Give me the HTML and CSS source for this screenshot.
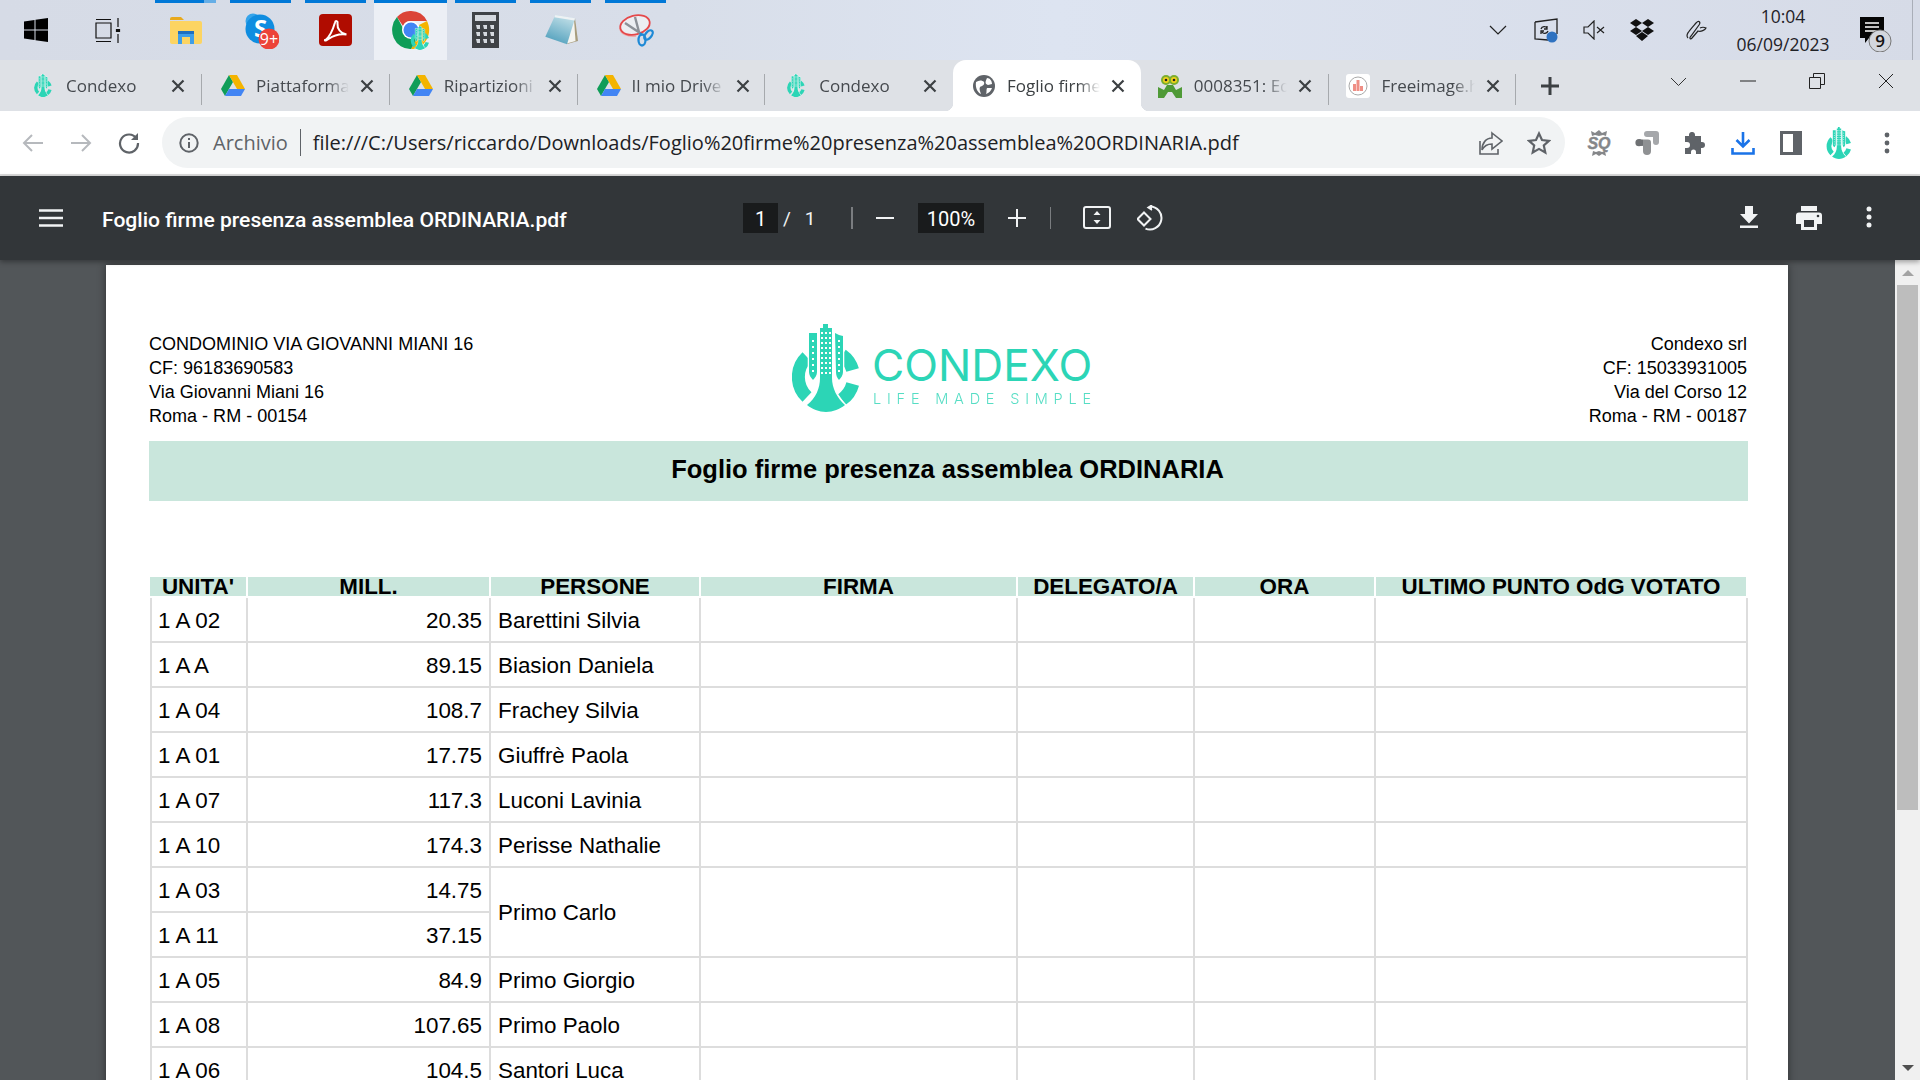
FILE: index.html
```html
<!DOCTYPE html>
<html lang="it">
<head>
<meta charset="utf-8">
<title>Foglio firme presenza assemblea ORDINARIA.pdf</title>
<link rel="stylesheet" href="styles.css">
</head>
<body>
<svg class="defs" width="0" height="0" aria-hidden="true">
  <defs>
    <linearGradient id="padg" x1="0.700" y1="0" x2="0.300" y2="1"><stop offset="0" stop-color="#c3e0e8"/><stop offset="1" stop-color="#4f9fbc"/></linearGradient>
  </defs>
  <symbol id="condexo" viewBox="0 0 68 88">
    <g fill="none" stroke="currentColor" stroke-width="13">
      <path d="M15 33A27.500 27.500 0 0 0 15 73"/>
      <path d="M50 31A27.500 27.500 0 0 1 60.600 46"/>
      <path d="M60.700 60A27.500 27.500 0 0 1 50 75.500"/>
    </g>
    <g fill="currentColor" stroke="#fff" stroke-width="2.600" paint-order="stroke">
      <path d="M17 9h8v39c0 3-2 6-4 8-2-2-4-5-4-8z"/>
      <path d="M43 9l4 2 4 1v36c0 3-2 6-4 8-2-2-3-5-3-8z"/>
      <path d="M31 0h5v4h4v50c0 10 5 20 13 27-5 4-12 7-19 7s-14-3-19-7c9-7 13-17 13-27V4h3z"/>
    </g>
    <path fill="#fff" d="M29 8h2v2h-2zM33 8h2v2h-2zM37 8h2v2h-2zM29 13h2v2h-2zM33 13h2v2h-2zM37 13h2v2h-2zM29 18h2v2h-2zM33 18h2v2h-2zM37 18h2v2h-2zM29 23h2v2h-2zM33 23h2v2h-2zM37 23h2v2h-2zM29 28h2v2h-2zM33 28h2v2h-2zM37 28h2v2h-2zM29 33h2v2h-2zM33 33h2v2h-2zM37 33h2v2h-2zM29 38h2v2h-2zM33 38h2v2h-2zM37 38h2v2h-2zM29 43h2v2h-2zM33 43h2v2h-2zM37 43h2v2h-2zM29 48h2v2h-2zM33 48h2v2h-2zM37 48h2v2h-2zM20 16h2v2h-2zM20 22h2v2h-2zM20 28h2v2h-2zM20 34h2v2h-2zM20 40h2v2h-2zM20 46h2v2h-2zM46 16h2v2h-2zM46 22h2v2h-2zM46 28h2v2h-2zM46 34h2v2h-2zM46 40h2v2h-2zM46 46h2v2h-2z"/>
  </symbol>
  <symbol id="drive" viewBox="0 0 24 22">
    <path fill="#0f9d58" d="M8 0 0 14l4 7L12 7z"/>
    <path fill="#f4b400" d="M8 0h8l8 14h-8z"/>
    <path fill="#4285f4" d="M4 21h16l4-7H8z"/>
  </symbol>
  <symbol id="close" viewBox="0 0 14 14">
    <path d="M1.500 1.500l11 11M12.500 1.500l-11 11" stroke="currentColor" stroke-width="2.200" fill="none"/>
  </symbol>
</svg>

<header class="taskbar">
  <div class="tb-start">
    <svg width="24" height="24" viewBox="0 0 24 24"><path d="M0 3.500 10.500 2v9.500H0zM11.500 1.800 24 0v11.500H11.500zM0 12.500h10.500V22L0 20.500zM11.500 12.500H24V24l-12.500-1.800z"/></svg>
  </div>
  <div class="tb-task">
    <svg width="26" height="25" viewBox="0 0 26 25" fill="none" stroke="#111" stroke-width="1.200"><path d="M1 1.500h15M1 23.500h15M1 5h15v15H1zM23 0v9M23 16v9"/><path d="M21.500 11.500h3v2h-3z" fill="#111"/></svg>
  </div>
  <div class="tb-item tb-first">
    <svg width="32" height="27" viewBox="0 0 32 27"><path fill="#e8a91d" d="M0 2a2 2 0 0 1 2-2h9l3 3H0z"/><path fill="#fcd462" d="M0 4h30a2 2 0 0 1 2 2v19a2 2 0 0 1-2 2H2a2 2 0 0 1-2-2z"/><path fill="#3f9ee8" d="M8 14h16v13h-4v-7h-8v7H8z"/><path fill="#1e6fc0" d="M8 14h16v3H8z"/></svg>
  </div>
  <div class="tb-item">
    <svg width="36" height="38" viewBox="0 0 36 38"><circle cx="10" cy="10" r="7.500" fill="#35a4ea"/><circle cx="17" cy="18" r="14.500" fill="#0f8de0"/><text class="sk-s" x="11" y="26">S</text><circle cx="26" cy="28" r="10.500" fill="#ec4339"/><text class="sk-b" x="26" y="33.500">9+</text></svg>
  </div>
  <div class="tb-item">
    <svg width="33" height="32" viewBox="0 0 33 32"><rect width="33" height="32" rx="4" fill="#b00c00"/><path d="M6.500 26c4-3 7-9 9.500-17.500.5-2 3-2 2.500 1-.5 5 3 10 9 11-7-1-13 1-18 4.500-2 1.500-4 2-3.500 1z" fill="none" stroke="#fff" stroke-width="2"/></svg>
  </div>
  <div class="tb-item tb-active">
    <svg width="38" height="40" viewBox="0 0 38 40"><path fill="#db4437" d="M19 1a18 19 0 0 1 16 10H19a8 8 0 0 0-8 5L5 7a18 19 0 0 1 14-6z"/><path fill="#f4b400" d="M35 11a18 19 0 0 1-16 28l8-14a9 9 0 0 0 0-10z"/><path fill="#0f9d58" d="M5 7a18 19 0 0 0 14 32l8-14a9 9 0 0 1-15-5z"/><circle cx="19" cy="20" r="9" fill="#fff"/><circle cx="19" cy="20" r="7.500" fill="#4285f4"/><use href="#condexo" x="18" y="16" width="20" height="24" class="teal"/></svg>
  </div>
  <div class="tb-item">
    <svg width="27" height="36" viewBox="0 0 27 36"><rect width="27" height="36" fill="#3f4246"/><rect x="3" y="3" width="21" height="6" fill="#d5d9df"/><g fill="#d5d9df"><path d="M4 13h4v4H5zM11 13h4v4h-3zM18 13h4v4h-3zM4 20h4v4H5zM11 20h4v4h-3zM18 20h4v4h-3zM4 27h4v4H5zM11 27h4v4h-3zM18 27h4v4h-3z"/></g></svg>
  </div>
  <div class="tb-item">
    <svg width="36" height="34" viewBox="0 0 36 34"><path fill="#a79c7c" d="M32 5l3 23-11 3z"/><path fill="#f4f4f0" d="M31 6l1.500 22L22 31z"/><path fill="url(#padg)" d="M12.300 2 32 5.300 24 31.300 2.300 23.700z"/><path fill="#eef2f4" d="M12.300 2 32 5.300l-.7 2.200L11.300 4.200z"/></svg>
  </div>
  <div class="tb-item">
    <svg width="36" height="36" viewBox="0 0 36 36" fill="none"><path d="M2 16c0 6 8 9 16 8" stroke="#f0a7a7" stroke-width="1.600"/><ellipse cx="17" cy="13" rx="15" ry="9.500" transform="rotate(-14 17 13)" stroke="#e5484a" stroke-width="1.800" fill="#eceef2"/><path d="M7 11l15 10M17 5l4 15" stroke="#8d9198" stroke-width="2.400"/><ellipse cx="24" cy="28" rx="3.500" ry="5.500" stroke="#1f8ad6" stroke-width="2.300"/><ellipse cx="30.500" cy="23" rx="3" ry="5.500" transform="rotate(40 30.500 23)" stroke="#1f8ad6" stroke-width="2.300"/><path d="M22 21l2 2" stroke="#1f8ad6" stroke-width="2.300"/></svg>
  </div>
  <div class="tray">
    <div class="tray-i"><svg width="18" height="10" viewBox="0 0 18 10" fill="none" stroke="#222" stroke-width="1.200"><path d="M1 1l8 8 8-8"/></svg></div>
    <div class="tray-i"><svg width="24" height="25" viewBox="0 0 24 25" fill="none" stroke="#222" stroke-width="1.300"><path d="M1 4l22-3v15M1 4v17l13 1"/><path d="M7 11c1-3 5-3 6-1M14 13c-1 3-5 3-6 1M13 8v3h-3M7 16v-3h3"/><circle cx="18" cy="19" r="5.500" fill="#2f72c0" stroke="none"/></svg></div>
    <div class="tray-i"><svg width="22" height="20" viewBox="0 0 22 20" fill="none" stroke="#222" stroke-width="1.200"><path d="M1 7h4l6-6v18l-6-6H1zM14 7l7 6M21 7l-7 6"/></svg></div>
    <div class="tray-i"><svg width="24" height="22" viewBox="0 0 24 22" fill="#111"><path d="M6 0l6 4-6 4-6-4zM18 0l6 4-6 4-6-4zM0 12l6-4 6 4-6 4zM12 12l6-4 6 4-6 4zM6 17l6-4 6 4-6 5z"/></svg></div>
    <div class="tray-i tray-pen"><svg width="22" height="24" viewBox="0 0 22 24" fill="none" stroke="#222" stroke-width="1.200"><path d="M3 20c-3-3 1-7 8-15 3-3 5-1 3 2L6 18c-2 2-1 4 1 2l6-7c3 1 7-1 8-3-2-1-4-1-6 0"/></svg></div>
    <div class="clock"><span>10:04</span><span>06/09/2023</span></div>
    <div class="tray-note">
      <svg width="38" height="36" viewBox="0 0 38 36"><path fill="#050505" d="M6 1h24v21H15l-4 5v-5H6z"/><path stroke="#fff" stroke-width="1.300" d="M11 7h14M11 11h14M11 15h14"/><circle cx="26" cy="25" r="11" fill="#d3d6dd" stroke="#777" stroke-width="1"/><text class="note-n" x="26" y="31">9</text></svg>
    </div>
    <div class="tray-end"></div>
  </div>
</header>

<nav class="tabstrip">
  <div class="tab tab-first"><svg class="fav teal" width="18" height="23"><use href="#condexo"/></svg><span class="tab-t">Condexo</span><svg class="tab-x" width="14" height="14"><use href="#close"/></svg></div>
  <div class="tab"><svg class="fav" width="24" height="22"><use href="#drive"/></svg><span class="tab-t">Piattaforma</span><svg class="tab-x" width="14" height="14"><use href="#close"/></svg></div>
  <div class="tab"><svg class="fav" width="24" height="22"><use href="#drive"/></svg><span class="tab-t">Ripartizioni</span><svg class="tab-x" width="14" height="14"><use href="#close"/></svg></div>
  <div class="tab"><svg class="fav" width="24" height="22"><use href="#drive"/></svg><span class="tab-t">Il mio Drive</span><svg class="tab-x" width="14" height="14"><use href="#close"/></svg></div>
  <div class="tab tab-pre"><svg class="fav teal" width="18" height="23"><use href="#condexo"/></svg><span class="tab-t">Condexo</span><svg class="tab-x" width="14" height="14"><use href="#close"/></svg></div>
  <div class="tab tab-on"><svg class="fav" width="22" height="22" viewBox="0 0 22 22"><circle cx="11" cy="11" r="11" fill="#5f6368"/><path fill="#fff" d="M3 7c3-2 6-2 8 0 1 3-2 4-4 5-1 2 0 4 1 7-3-1-6-6-5-12zM14 3c3 0 5 3 5 6l-4 1c-3-1-3-3-1-7zM14 13h5c-1 3-3 5-6 6 1-2 0-4 1-6z"/></svg><span class="tab-t">Foglio firme</span><svg class="tab-x" width="14" height="14"><use href="#close"/></svg></div>
  <div class="tab tab-left"><svg class="fav" width="24" height="24" viewBox="0 0 24 24"><path fill="#4f9a37" d="M0 24V13l6 3 3-5h6l3 5 6-3v11h-6l-4-6h-4l-4 6z"/><circle cx="8" cy="6" r="5" fill="#7cae2f"/><circle cx="16" cy="6" r="5" fill="#7cae2f"/><circle cx="8" cy="6" r="3" fill="#f3d21a"/><circle cx="16" cy="6" r="3" fill="#f3d21a"/><circle cx="8" cy="6" r="1.300" fill="#222"/><circle cx="16" cy="6" r="1.300" fill="#222"/></svg><span class="tab-t">0008351: Edit</span><svg class="tab-x" width="14" height="14"><use href="#close"/></svg></div>
  <div class="tab tab-left"><svg class="fav" width="24" height="24" viewBox="0 0 24 24"><rect width="24" height="24" rx="3" fill="#fff"/><circle cx="12" cy="12" r="9" fill="#fff" stroke="#aaa"/><path fill="#ef8f86" d="M7 17V10h3v7zM10.500 17V6h3v11zM14 17v-5h3v5z"/></svg><span class="tab-t">Freeimage.host</span><svg class="tab-x" width="14" height="14"><use href="#close"/></svg></div>
  <div class="newtab"><svg width="20" height="20" viewBox="0 0 20 20"><path d="M10 1v18M1 10h18" stroke="#3c4043" stroke-width="3"/></svg></div>
  <div class="winbtns">
    <div class="wb"><svg width="17" height="9" viewBox="0 0 17 9" fill="none" stroke="#333" stroke-width="1"><path d="M1 1l7.500 7.500L16 1"/></svg></div>
    <div class="wb"><svg width="16" height="2" viewBox="0 0 16 2"><path d="M0 1h16" stroke="#222" stroke-width="1"/></svg></div>
    <div class="wb"><svg width="16" height="16" viewBox="0 0 16 16" fill="none" stroke="#222" stroke-width="1"><path d="M.5 4.500h11v11H.5zM4.500 4.500v-4h11v11h-4"/></svg></div>
    <div class="wb"><svg width="16" height="16" viewBox="0 0 16 16" fill="none" stroke="#222" stroke-width="1"><path d="M1 1l14 14M15 1 1 15"/></svg></div>
  </div>
</nav>

<div class="toolbar">
  <div class="tl-btn"><svg width="22" height="18" viewBox="0 0 22 18" fill="none" stroke="#b6b9bd" stroke-width="2"><path d="M21 9H2M10 1 2 9l8 8"/></svg></div>
  <div class="tl-btn"><svg width="22" height="18" viewBox="0 0 22 18" fill="none" stroke="#b6b9bd" stroke-width="2"><path d="M1 9h19M12 1l8 8-8 8"/></svg></div>
  <div class="tl-btn"><svg width="22" height="22" viewBox="0 0 22 22" fill="none" stroke="#5f6368" stroke-width="2.200"><path d="M18.500 6.500A9 9 0 1 0 20 11"/><path d="M20 1v7h-7" fill="#5f6368" stroke="none"/></svg></div>
  <div class="omni">
    <svg class="omni-info" width="20" height="20" viewBox="0 0 20 20"><circle cx="10" cy="10" r="8.700" fill="none" stroke="#5f6368" stroke-width="2"/><path d="M10 9v6M10 5v2" stroke="#5f6368" stroke-width="2"/></svg>
    <span class="omni-a">Archivio</span>
    <span class="omni-sep"></span>
    <span class="omni-u">file:///C:/Users/riccardo/Downloads/Foglio%20firme%20presenza%20assemblea%20ORDINARIA.pdf</span>
    <svg class="omni-share" width="24" height="24" viewBox="0 0 24 24" fill="none" stroke="#5f6368" stroke-width="1.600"><path d="M1 10v13h18v-5"/><path d="M13 2l10 8-10 8v-5c-5 0-8 2-10 6 0-7 4-12 10-12z"/></svg>
    <svg class="omni-star" width="24" height="24" viewBox="0 0 24 24" fill="none" stroke="#5f6368" stroke-width="2.200"><path d="M12 2.500l3 6.500 7 .8-5.200 4.700 1.500 7L12 17.900 5.700 21.500l1.500-7L2 9.800l7-.8z"/></svg>
  </div>
  <div class="ext-row">
    <div class="tl-btn"><svg width="24" height="26" viewBox="0 0 24 26"><path fill="#85878a" d="M4 1l4 2 4-3 3 3 5-2-1 5-3-1-4 1-4-1-3 1zM6 21l3 1 3-1 3 1 3-1 1 5-4-2-3 2-3-2-4 2z"/><text class="ext-sq" x="12" y="19">SQ</text></svg></div>
    <div class="tl-btn"><svg width="24" height="26" viewBox="0 0 24 26"><path fill="#a5a7aa" d="M12 1h9a3 3 0 0 1 3 3v8a3 3 0 0 1-6 0V7h-6a3 3 0 0 1 0-6z"/><path fill="#8f9193" d="M8 9.500h5a3 3 0 0 1 3 3V21a4 4 0 0 1-8 0z"/><circle cx="4" cy="12.700" r="3.600" fill="#6e7073"/><path fill="#6e7073" d="M4 9.500h4v6.400H4z"/></svg></div>
    <div class="tl-btn"><svg width="22" height="22" viewBox="0 0 22 22"><path fill="#5f6368" d="M8 0a2.800 2.800 0 0 1 3 3v1h6v6h1a3 3 0 0 1 0 6h-1v6h-5v-2a2.500 2.500 0 0 0-5 0v2H1v-6h2a3 3 0 0 0 0-6H1V4h4V3a2.800 2.800 0 0 1 3-3z"/></svg></div>
    <div class="tl-btn"><svg width="24" height="24" viewBox="0 0 24 24" fill="none" stroke="#1a73e8" stroke-width="2.600"><path d="M12 1v14M5.500 9l6.500 6.500L18.500 9"/><path d="M1.500 17v5.500h21V17"/></svg></div>
    <div class="tl-btn"><svg width="22" height="24" viewBox="0 0 22 24"><path fill="#5f6368" d="M0 0h22v24H0z"/><path fill="#fff" d="M3 3h10v18H3z"/></svg></div>
    <div class="tl-btn"><svg class="teal" width="26" height="32"><use href="#condexo"/></svg></div>
    <div class="tl-btn"><svg width="6" height="22" viewBox="0 0 6 22" fill="#5f6368"><circle cx="3" cy="3" r="2.400"/><circle cx="3" cy="11" r="2.400"/><circle cx="3" cy="19" r="2.400"/></svg></div>
  </div>
</div>

<section class="pdfbar">
  <svg class="pb-menu" width="24" height="18" viewBox="0 0 24 18"><path d="M0 1.500h24M0 9h24M0 16.500h24" stroke="#f1f3f4" stroke-width="2.400"/></svg>
  <span class="pb-title">Foglio firme presenza assemblea ORDINARIA.pdf</span>
  <span class="pb-input pb-page">1</span>
  <span class="pb-slash">/</span>
  <span class="pb-total">1</span>
  <span class="pb-sep"></span>
  <div class="pb-btn"><svg width="18" height="2" viewBox="0 0 18 2"><path d="M0 1h18" stroke="#f1f3f4" stroke-width="2"/></svg></div>
  <span class="pb-input pb-zoom">100%</span>
  <div class="pb-btn"><svg width="18" height="18" viewBox="0 0 18 18"><path d="M9 0v18M0 9h18" stroke="#f1f3f4" stroke-width="2"/></svg></div>
  <span class="pb-sep pb-sep2"></span>
  <div class="pb-btn pb-fit"><svg width="28" height="24" viewBox="0 0 28 24"><rect x="1" y="1" width="26" height="21" rx="2" fill="none" stroke="#f1f3f4" stroke-width="2"/><path fill="#f1f3f4" d="M14 5l3.500 4h-7zM14 18l-3.500-4h7z"/></svg></div>
  <div class="pb-btn pb-rot"><svg width="26" height="26" viewBox="0 0 26 26" fill="none" stroke="#f1f3f4" stroke-width="2"><path d="M15 1.500h-2A11.500 11.500 0 1 1 8.500 23.600"/><path d="M15 0l-4 2.500 4 2.500" stroke-width="1.500" fill="#f1f3f4"/><path d="M7 7.500l6.500 6.500L7 20.500.5 14z"/></svg></div>
  <div class="pb-right">
    <div class="pb-r"><svg width="18" height="22" viewBox="0 0 18 22" fill="#f1f3f4"><path d="M5 0h8v8h5l-9 9.500L0 8h5zM0 19.500h18V22H0z"/></svg></div>
    <div class="pb-r"><svg width="26" height="24" viewBox="0 0 26 24" fill="#f1f3f4"><path d="M5 0h16v5H5zM3 6.500h20a3 3 0 0 1 3 3V18h-5v6H5v-6H0V9.500a3 3 0 0 1 3-3z"/><path fill="#323639" d="M8 14h10v7H8z"/><circle cx="22" cy="10" r="1.300" fill="#323639"/></svg></div>
    <div class="pb-r"><svg width="6" height="22" viewBox="0 0 6 22" fill="#f1f3f4"><circle cx="3" cy="3" r="2.500"/><circle cx="3" cy="11" r="2.500"/><circle cx="3" cy="19" r="2.500"/></svg></div>
  </div>
</section>

<main class="viewer">
  <div class="canvas">
    <article class="page">
      <div class="doc-head">
        <div class="doc-from">
          <div>CONDOMINIO VIA GIOVANNI MIANI 16</div>
          <div>CF: 96183690583</div>
          <div>Via Giovanni Miani 16</div>
          <div>Roma - RM - 00154</div>
        </div>
        <div class="logo">
          <svg class="logo-mark teal" width="68" height="88"><use href="#condexo"/></svg>
          <div class="logo-text">
            <div class="logo-name">CONDEXO</div>
            <div class="logo-tag">LIFE MADE SIMPLE</div>
          </div>
        </div>
        <div class="doc-to">
          <div>Condexo srl</div>
          <div>CF: 15033931005</div>
          <div>Via del Corso 12</div>
          <div>Roma - RM - 00187</div>
        </div>
      </div>
      <h1 class="band">Foglio firme presenza assemblea ORDINARIA</h1>
      <table class="sheet">
        <colgroup>
          <col class="c1"><col class="c2"><col class="c3"><col class="c4"><col class="c5"><col class="c6"><col class="c7">
        </colgroup>
        <thead>
          <tr><th>UNITA'</th><th>MILL.</th><th>PERSONE</th><th>FIRMA</th><th>DELEGATO/A</th><th>ORA</th><th>ULTIMO PUNTO OdG VOTATO</th></tr>
        </thead>
        <tbody>
          <tr><td>1 A 02</td><td class="num">20.35</td><td>Barettini Silvia</td><td></td><td></td><td></td><td></td></tr>
          <tr><td>1 A A</td><td class="num">89.15</td><td>Biasion Daniela</td><td></td><td></td><td></td><td></td></tr>
          <tr><td>1 A 04</td><td class="num">108.7</td><td>Frachey Silvia</td><td></td><td></td><td></td><td></td></tr>
          <tr><td>1 A 01</td><td class="num">17.75</td><td>Giuffrè Paola</td><td></td><td></td><td></td><td></td></tr>
          <tr><td>1 A 07</td><td class="num">117.3</td><td>Luconi Lavinia</td><td></td><td></td><td></td><td></td></tr>
          <tr><td>1 A 10</td><td class="num">174.3</td><td>Perisse Nathalie</td><td></td><td></td><td></td><td></td></tr>
          <tr><td>1 A 03</td><td class="num">14.75</td><td rowspan="2">Primo Carlo</td><td rowspan="2"></td><td rowspan="2"></td><td rowspan="2"></td><td rowspan="2"></td></tr>
          <tr><td>1 A 11</td><td class="num">37.15</td></tr>
          <tr><td>1 A 05</td><td class="num">84.9</td><td>Primo Giorgio</td><td></td><td></td><td></td><td></td></tr>
          <tr><td>1 A 08</td><td class="num">107.65</td><td>Primo Paolo</td><td></td><td></td><td></td><td></td></tr>
          <tr><td>1 A 06</td><td class="num">104.5</td><td>Santori Luca</td><td></td><td></td><td></td><td></td></tr>
        </tbody>
      </table>
    </article>
  </div>
  <aside class="scroll">
    <div class="sb-arrow"><span class="sb-up"></span></div>
    <div class="sb-thumb"></div>
    <div class="sb-track"></div>
    <div class="sb-arrow"><span class="sb-down"></span></div>
  </aside>
</main>
</body>
</html>
```
FILE: styles.css
```css
* { box-sizing: border-box; }
html, body { margin: 0; padding: 0; }
body {
  width: 1920px;
  height: 1080px;
  overflow: hidden;
  display: flex;
  flex-direction: column;
  font-family: "Open Sans", "Noto Sans", sans-serif;
  background: #fff;
}
svg { display: block; flex: none; }
.defs { position: absolute; }
.teal { color: #2cd5b6; }

/* windows taskbar */
.taskbar {
  height: 60px;
  flex: none;
  display: flex;
  background: linear-gradient(90deg, #d6dbe6 0%, #d8dee9 35%, #dde4f1 55%, #d6dbe7 100%);
}
.tb-start, .tb-task, .tb-item { height: 60px; display: flex; align-items: center; justify-content: center; flex: none; }
.tb-start { width: 72px; }
.tb-task { width: 72px; margin-right: 4px; }
.tb-item {
  width: 75px;
  background: linear-gradient(#0078d7, #0078d7) center top / 61px 3px no-repeat;
}
.tb-first {
  background:
    linear-gradient(#66aee6, #66aee6) 56px 0 / 12px 3px no-repeat,
    linear-gradient(#0078d7, #0078d7) center top / 61px 3px no-repeat;
}
.tb-active {
  width: 73px;
  margin: 0 1px;
  background:
    linear-gradient(#0078d7, #0078d7) top / 100% 3px no-repeat,
    #eceff5;
}
.tray { margin-left: auto; display: flex; align-items: center; height: 60px; }
.tray-i { width: 48px; display: flex; justify-content: center; }
.tray-pen { width: 60px; }
.clock {
  width: 114px;
  display: flex;
  flex-direction: column;
  align-items: center;
  gap: 5px;
  font-size: 17.500px;
  line-height: 23px;
  color: #1f2227;
}
.tray-note { width: 60px; display: flex; justify-content: center; padding-left: 6px; padding-top: 8px; }
.tray-end { width: 8px; height: 60px; margin-left: 12px; border-left: 1px solid #a9aeb8; }
.sk-s { font: 700 24px "Open Sans", sans-serif; fill: #fff; }
.sk-b { font: 400 16px "Open Sans", sans-serif; fill: #fff; text-anchor: middle; }
.note-n { font: 600 17px "Open Sans", sans-serif; fill: #111; text-anchor: middle; }

/* chrome tab strip */
.tabstrip {
  height: 51px;
  flex: none;
  display: flex;
  padding-left: 12px;
  background: #dee1e6;
}
.tab {
  width: 187.750px;
  height: 51px;
  flex: none;
  display: flex;
  align-items: center;
  padding-left: 16px;
  color: #45494e;
  background: linear-gradient(#a6a9ad, #a6a9ad) right 14px / 1px 31px no-repeat;
}
.tab .fav { margin-left: 3px; width: 24px; }
.tab-first { width: 190px; }
.tab-first .tab-t { width: 94px; }
.tab-left .fav { margin-left: 1px; }
.tab-left .tab-t { margin-left: 12px; }
.tab-t {
  width: 93px;
  margin-left: 11px;
  white-space: nowrap;
  overflow: hidden;
  font-size: 17px;
  line-height: 24px;
  -webkit-mask-image: linear-gradient(90deg, #000 76%, transparent 100%);
  mask-image: linear-gradient(90deg, #000 76%, transparent 100%);
}
.tab-x { margin-left: 11px; color: #3c4043; }
.tab-pre { background: none; }
.tab-on {
  background: #fff;
  border-radius: 13px 13px 0 0;
  position: relative;
  color: #3c4043;
}
.tab-on::before, .tab-on::after {
  content: "";
  position: absolute;
  bottom: 0;
  width: 8px;
  height: 8px;
}
.tab-on::before { left: -8px; background: radial-gradient(circle at 0 0, transparent 8px, #fff 8.500px); }
.tab-on::after { right: -8px; background: radial-gradient(circle at 100% 0, transparent 8px, #fff 8.500px); }
.newtab { width: 68px; height: 51px; flex: none; display: flex; align-items: center; justify-content: center; }
.winbtns { margin-left: auto; display: flex; width: 276px; height: 42px; }
.wb { width: 69px; display: flex; align-items: center; justify-content: center; }

/* address bar */
.toolbar {
  height: 65px;
  flex: none;
  display: flex;
  align-items: flex-start;
  padding: 6px 0 0 9px;
  background: #fff;
  border-bottom: 2px solid #dcdcdc;
}
.tl-btn { width: 48px; height: 51px; flex: none; display: flex; align-items: center; justify-content: center; }
.omni {
  width: 1403px;
  height: 51px;
  flex: none;
  margin-left: 9px;
  display: flex;
  align-items: center;
  padding-left: 17px;
  border-radius: 26px;
  background: #f1f3f4;
}
.omni-a { margin-left: 14px; font-size: 20px; color: #5f6368; }
.omni-sep { width: 1px; height: 27px; margin: 0 12px 0 12px; background: #5f6368; }
.omni-u { width: 1166px; white-space: nowrap; font-size: 20px; color: #202124; }
.omni-star { margin-left: 24px; }
.ext-row { display: flex; margin-left: 10px; }
.ext-sq { font: italic 700 16px "Liberation Sans", sans-serif; fill: #85878a; stroke: #85878a; stroke-width: .4px; text-anchor: middle; }

/* pdf toolbar */
.pdfbar {
  height: 84px;
  flex: none;
  display: flex;
  align-items: center;
  padding-left: 39px;
  background: #323639;
  color: #f1f3f4;
  position: relative;
  z-index: 2;
  box-shadow: 0 2px 5px rgba(0, 0, 0, .35);
}
.pb-menu { margin-right: 39px; }
.pb-title { width: 641px; flex: none; padding-top: 2px; font: 500 21.100px "Roboto", sans-serif; white-space: nowrap; color: #fff; }
.pb-input {
  height: 30px;
  flex: none;
  background: #191b1c;
  text-align: center;
  font: 400 20px/32px "Roboto", sans-serif;
  color: #fff;
}
.pb-page { width: 35px; }
.pb-slash { width: 18px; text-align: center; font: 400 19px "Roboto", sans-serif; }
.pb-total { width: 26px; margin-left: 1px; text-align: center; font: 400 19px "Roboto", sans-serif; }
.pb-sep { width: 2px; height: 22px; margin-left: 27.500px; background: #7a7d80; flex: none; }
.pb-btn { width: 66px; display: flex; justify-content: center; flex: none; }
.pb-sep + .pb-btn { width: 65.500px; }
.pb-zoom { width: 66px; }
.pb-sep.pb-sep2 { width: 1px; margin-left: 0; }
.pb-sep2 + .pb-btn.pb-fit { width: 60px; margin-left: 16px; }
.pb-btn.pb-rot { width: 46px; }
.pb-right { margin-left: auto; display: flex; padding-right: 21px; }
.pb-r { width: 60px; display: flex; justify-content: center; }

/* viewer */
.viewer { flex: 1; min-height: 0; display: flex; overflow: hidden; }
.canvas {
  width: 1895px;
  flex: none;
  padding: 5px 0 0 106px;
  background: #525659;
  overflow: hidden;
}
.page {
  width: 1682px;
  min-height: 1000px;
  padding: 67px 40px 0 43px;
  background: #fff;
  color: #000;
  font-family: "Liberation Sans", Arial, sans-serif;
  box-shadow: 0 0 8px rgba(0, 0, 0, .45);
}
.doc-head {
  display: grid;
  grid-template-columns: 643px 298px 1fr;
  height: 96px;
  font-size: 18.050px;
  line-height: 24px;
}
.doc-to { text-align: right; padding-right: 1px; }
.logo { display: flex; gap: 12px; height: 88px; margin-top: -8px; }
.logo-text { display: flex; flex-direction: column; padding-top: 19px; color: #2cd5b6; font-family: "Inter", sans-serif; }
.logo-name { font-size: 44.200px; font-weight: 400; line-height: 44px; white-space: nowrap; }
.logo-tag { margin-top: 4px; padding-left: 1px; font-size: 14.500px; font-weight: 300; line-height: 15px; white-space: nowrap; letter-spacing: 5.800px; opacity: .8; }
.band {
  height: 60px;
  margin: 13px 0 76px;
  padding-right: 2px;
  background: #c9e6dc;
  text-align: center;
  font-size: 25.500px;
  line-height: 57px;
  font-weight: 700;
}
.sheet {
  width: 1598px;
  margin-left: 1px;
  table-layout: fixed;
  border-collapse: separate;
  border-spacing: 0;
  font-size: 22.400px;
}
.c1 { width: 98px; } .c2 { width: 243px; } .c3 { width: 210px; } .c4 { width: 317px; }
.c5 { width: 177px; } .c6 { width: 181px; } .c7 { width: 372px; }
.sheet th {
  height: 21px;
  padding: 1px 0 0 0;
  background: #c9e6dc;
  background-clip: padding-box;
  border-right: 2px solid #fff;
  border-bottom: 2px solid #fff;
  line-height: 18px;
  font-weight: 700;
  text-align: center;
  white-space: nowrap;
}
.sheet td {
  height: 45px;
  padding: 2px 7px 0 7px;
  border-right: 2px solid #ddd;
  border-bottom: 2px solid #ddd;
  line-height: 26px;
  white-space: nowrap;
}
.sheet td:first-child { border-left: 2px solid #ddd; padding-left: 6px; }
.sheet td.num { border-left: 0; padding-left: 0; text-align: right; }

/* scrollbar */
.scroll { width: 25px; flex: none; display: flex; flex-direction: column; background: #f0f0f0; }
.sb-arrow { height: 25px; flex: none; display: flex; align-items: center; justify-content: center; }
.sb-up { width: 0; height: 0; border: 6px solid transparent; border-top: 0; border-bottom: 6px solid #a3a3a3; }
.sb-down { width: 0; height: 0; border: 6px solid transparent; border-bottom: 0; border-top: 6px solid #505050; }
.sb-thumb { height: 525px; margin: 0 2px; background: #bdbdbd; flex: none; }
.sb-track { flex: 1; }
```
